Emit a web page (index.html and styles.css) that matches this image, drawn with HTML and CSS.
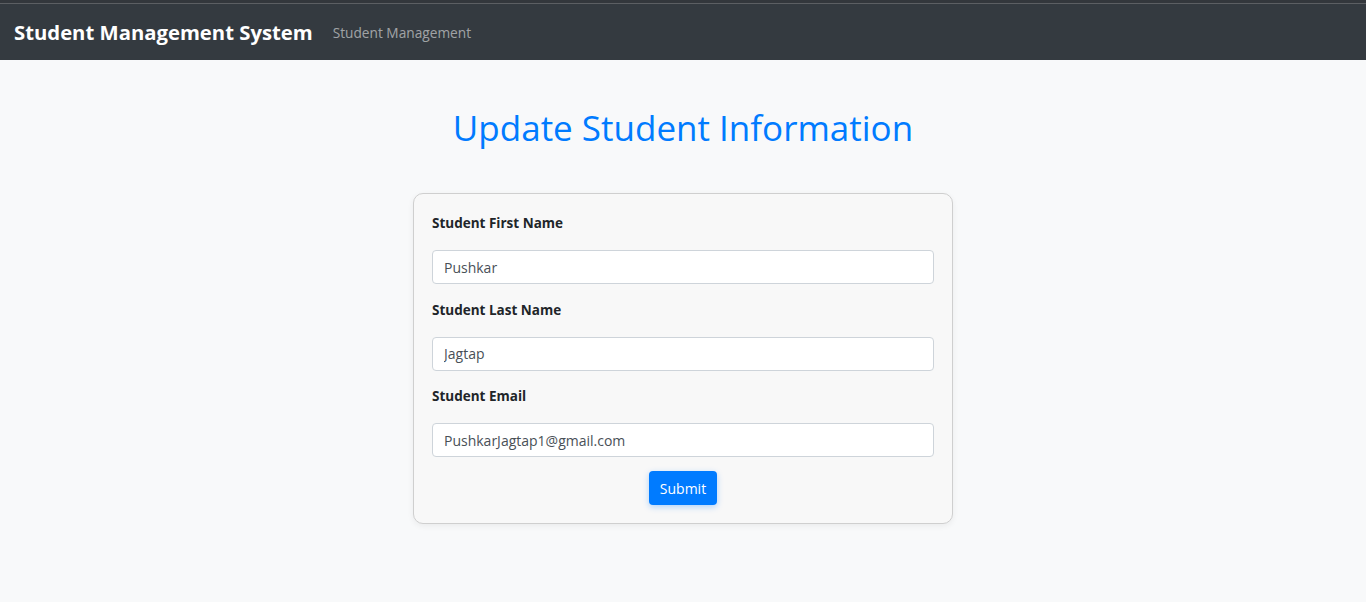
FILE: index.html
```html
<!DOCTYPE html>
<html lang="en">
<head>
<meta charset="utf-8">
<title>Student Management System</title>
<link rel="stylesheet" href="styles.css">
</head>
<body>
<div class="topstrip"></div>
<nav class="navbar">
  <a class="brand" href="#">Student Management System</a>
  <a class="navlink" href="#">Student Management</a>
</nav>
<main class="main">
  <h1 class="title">Update Student Information</h1>
  <form class="card">
    <div class="group">
      <label class="label">Student First Name</label>
      <input class="input" type="text" value="Pushkar">
    </div>
    <div class="group">
      <label class="label">Student Last Name</label>
      <input class="input" type="text" value="Jagtap">
    </div>
    <div class="group">
      <label class="label">Student Email</label>
      <input class="input" type="text" value="PushkarJagtap1@gmail.com">
    </div>
    <div class="actions">
      <button class="btn" type="button">Submit</button>
    </div>
  </form>
</main>
</body>
</html>
```
FILE: styles.css
```css
* { box-sizing: border-box; }
html, body { margin: 0; padding: 0; }
body {
  background: #f8f9fa;
  font-family: "Open Sans", "Noto Sans", sans-serif;
  color: #212529;
  height: 602px;
  overflow: hidden;
}
.topstrip {
  height: 4px;
  background: #33373c;
  border-bottom: 1px solid #5c5f63;
}
.navbar {
  height: 56px;
  background: #343a40;
  display: flex;
  align-items: center;
  padding: 0 14px;
}
.brand {
  color: #fff;
  font-weight: 700;
  font-size: 20.3px;
  text-decoration: none;
  margin-right: 20px;
}
.navlink {
  color: rgba(255,255,255,0.55);
  font-size: 13.7px;
  text-decoration: none;
}
.main {
  display: flex;
  flex-direction: column;
  align-items: center;
}
.title {
  color: #007bff;
  font-weight: 500;
  font-size: 35px;
  margin: 44px 0 41px;
  line-height: 48px;
}
.card {
  width: 540px;
  background: #f8f8f8;
  border: 1px solid #cfcfcf;
  border-radius: 10px;
  box-shadow: 0 2px 6px rgba(0,0,0,0.06);
  padding: 19px 18px 18px;
  display: flex;
  flex-direction: column;
}
.group {
  display: flex;
  flex-direction: column;
  margin-bottom: 15.5px;
}
.group:nth-child(3) { margin-bottom: 14px; }
.label {
  font-weight: 700;
  font-size: 13.5px;
  line-height: 21px;
  margin-bottom: 16px;
  color: #212529;
}
.input {
  height: 34px;
  border: 1px solid #ced4da;
  border-radius: 4px;
  background: #fff;
  padding: 0 11px;
  font-family: inherit;
  font-size: 14px;
  color: #495057;
}
.actions {
  display: flex;
  justify-content: center;
}
.btn {
  height: 34px;
  width: 68px;
  border: none;
  border-radius: 4px;
  background: #007bff;
  color: #fff;
  font-family: inherit;
  font-size: 14px;
  box-shadow: 0 2px 6px rgba(0,123,255,0.3);
  cursor: pointer;
}
```
